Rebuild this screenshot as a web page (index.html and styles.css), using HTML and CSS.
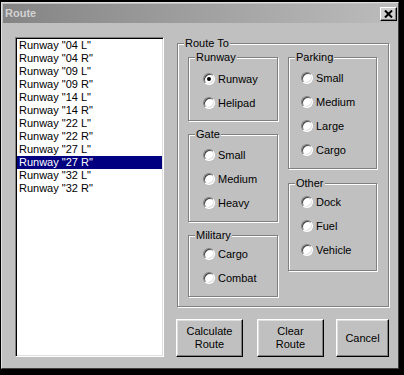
FILE: index.html
```html
<!DOCTYPE html>
<html lang="en">
<head>
  <meta charset="UTF-8">
  <title>Route</title>
  <link rel="stylesheet" href="styles.css">
</head>
<body>
  <div class="window">
    <!-- Title bar -->
    <div class="title-bar">
      <span class="title">Route</span>
      <button class="close-btn" aria-label="Close">
        <svg width="9" height="8" viewBox="0 0 9 8"><path d="M1 0.5 L8 7.5 M8 0.5 L1 7.5" stroke="#000" stroke-width="2"/></svg>
      </button>
    </div>

    <div class="client">
      <!-- Runway list -->
      <ul class="listbox">
        <li>Runway "04 L"</li>
        <li>Runway "04 R"</li>
        <li>Runway "09 L"</li>
        <li>Runway "09 R"</li>
        <li>Runway "14 L"</li>
        <li>Runway "14 R"</li>
        <li>Runway "22 L"</li>
        <li>Runway "22 R"</li>
        <li>Runway "27 L"</li>
        <li class="selected">Runway "27 R"</li>
        <li>Runway "32 L"</li>
        <li>Runway "32 R"</li>
      </ul>

      <div class="right-col">
        <fieldset class="group route-to">
          <legend>Route To</legend>
          <div class="route-body">
            <div class="col left">
              <fieldset class="group runway">
                <legend>Runway</legend>
                <div class="option"><span class="radio"><span class="dot"></span></span>Runway</div>
                <div class="option"><span class="radio"></span>Helipad</div>
              </fieldset>
              <fieldset class="group gate">
                <legend>Gate</legend>
                <div class="option"><span class="radio"></span>Small</div>
                <div class="option"><span class="radio"></span>Medium</div>
                <div class="option"><span class="radio"></span>Heavy</div>
              </fieldset>
              <fieldset class="group military">
                <legend>Military</legend>
                <div class="option"><span class="radio"></span>Cargo</div>
                <div class="option"><span class="radio"></span>Combat</div>
              </fieldset>
            </div>
            <div class="col right">
              <fieldset class="group parking">
                <legend>Parking</legend>
                <div class="option"><span class="radio"></span>Small</div>
                <div class="option"><span class="radio"></span>Medium</div>
                <div class="option"><span class="radio"></span>Large</div>
                <div class="option"><span class="radio"></span>Cargo</div>
              </fieldset>
              <fieldset class="group other">
                <legend>Other</legend>
                <div class="option"><span class="radio"></span>Dock</div>
                <div class="option"><span class="radio"></span>Fuel</div>
                <div class="option"><span class="radio"></span>Vehicle</div>
              </fieldset>
            </div>
          </div>
        </fieldset>

        <!-- Buttons -->
        <div class="buttons">
          <button class="btn">Calculate<br>Route</button>
          <button class="btn">Clear<br>Route</button>
          <button class="btn cancel">Cancel</button>
        </div>
      </div>
    </div>
  </div>
</body>
</html>
```

FILE: styles.css
```css
body {
  margin: 0;
  background-color: #000;
  font-family: "Liberation Sans", Arial, sans-serif;
  font-size: 11px;
  line-height: 13px;
  color: #000;
}

.window {
  box-sizing: border-box;
  width: 398px;
  height: 367px;
  margin: 2px 0 0 1px;
  padding: 1px;
  background-color: #c0c0c0;
  border: 1px solid;
  border-color: #dfdfdf #404040 #404040 #dfdfdf;
}

.title-bar {
  height: 19px;
  display: flex;
  align-items: center;
  justify-content: space-between;
  padding: 0 0 0 2px;
  background: linear-gradient(to right, #848484, #bcbcbc);
}

.title {
  color: #d2d2d2;
  font-weight: bold;
}

.close-btn {
  box-sizing: border-box;
  width: 17px;
  height: 14px;
  padding: 0;
  display: flex;
  align-items: center;
  justify-content: center;
  background-color: #d0d0d0;
  border: 1px solid;
  border-color: #fff #000 #000 #fff;
  box-shadow: inset -1px -1px 0 #808080;
}

.client {
  display: flex;
  gap: 12px;
  padding: 14px 0 0 12px;
}

.listbox {
  box-sizing: border-box;
  width: 149px;
  height: 320px;
  margin: 0;
  padding: 1px;
  list-style: none;
  background-color: #fff;
  border: 1px solid;
  border-color: #808080 #fff #fff #808080;
  box-shadow: inset 1px 1px 0 #000, inset -1px -1px 0 #dfdfdf;
}

.listbox li {
  height: 13px;
  padding-left: 2px;
  white-space: pre;
}

.listbox li.selected {
  background-color: #000080;
  color: #fff;
}

.right-col {
  width: 213px;
  display: flex;
  flex-direction: column;
  gap: 12px;
}

.group {
  margin: 0;
  padding: 2px 0 6px 0;
  border: 1px solid #808080;
  box-shadow: 1px 1px 0 #fff, inset 1px 1px 0 #fff;
}

.group legend {
  margin-left: 6px;
  padding: 0 1px;
  background-color: #c0c0c0;
  line-height: 13px;
}

.group.runway {
  padding: 3px 0 5px 0;
}

.group.military {
  padding: 0 0 6px 0;
}

.group.other {
  padding: 0 0 8px 0;
}

.route-to {
  height: 270px;
  box-sizing: border-box;
  margin-left: 1px;
  padding: 0;
}

.route-body {
  display: flex;
  gap: 10px;
  padding: 1px 11px 0 10px;
}

.col {
  display: flex;
  flex-direction: column;
  gap: 7px;
}

.col.left {
  width: 90px;
}

.col.right {
  width: 89px;
  gap: 8px;
}

.option {
  height: 24px;
  display: flex;
  align-items: center;
  gap: 3px;
  padding-left: 14px;
}

.col.right .option {
  padding-left: 12px;
}

.radio {
  box-sizing: border-box;
  width: 12px;
  height: 12px;
  display: inline-flex;
  align-items: center;
  justify-content: center;
  border-radius: 50%;
  background-color: #fff;
  border: 1px solid;
  border-color: #808080 #fff #fff #808080;
  box-shadow: inset 1px 1px 0 #404040, inset -1px -1px 0 #dfdfdf;
}

.dot {
  width: 4px;
  height: 4px;
  border-radius: 50%;
  background-color: #000;
}

.buttons {
  display: flex;
  gap: 14px;
}

.btn {
  box-sizing: border-box;
  width: 67px;
  height: 38px;
  padding: 0;
  font-family: inherit;
  font-size: 11px;
  line-height: 13px;
  color: #000;
  background-color: #c0c0c0;
  border: 1px solid;
  border-color: #fff #000 #000 #fff;
  box-shadow: inset -1px -1px 0 #808080, inset 1px 1px 0 #dfdfdf;
}

.btn.cancel {
  width: 53px;
  margin-left: -2px;
}
```
